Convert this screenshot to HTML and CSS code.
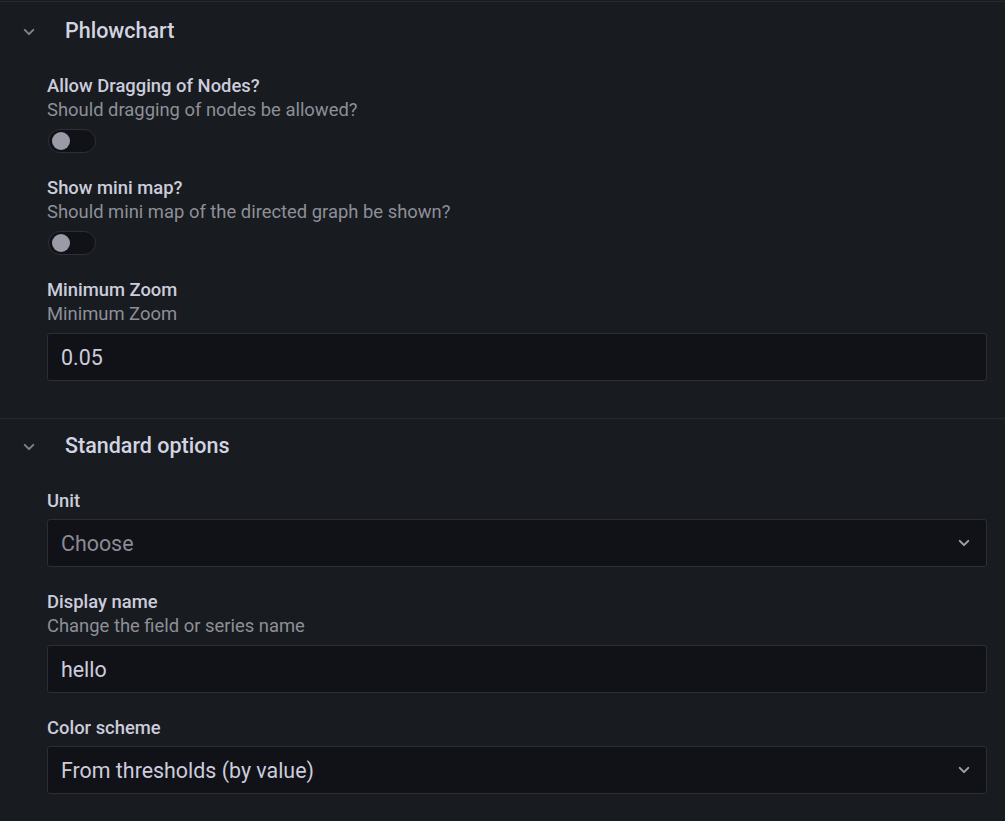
FILE: index.html
```html
<!DOCTYPE html>
<html lang="en">
<head>
<meta charset="utf-8">
<title>Panel options</title>
<link rel="stylesheet" href="styles.css">
</head>
<body>
<div class="pane">
  <section class="section">
    <div class="section-header">
      <span class="chevron-box">
        <svg viewBox="0 0 24 24" width="24" height="24"><path d="M17,9.17a1,1,0,0,0-1.41,0L12,12.71,8.46,9.17a1,1,0,0,0-1.41,0,1,1,0,0,0,0,1.42l4.24,4.24a1,1,0,0,0,1.42,0L17,10.59A1,1,0,0,0,17,9.17Z"/></svg>
      </span>
      <span class="section-title">Phlowchart</span>
    </div>
    <div class="section-body">
      <div class="field">
        <div class="label">Allow Dragging of Nodes?</div>
        <div class="desc">Should dragging of nodes be allowed?</div>
        <div class="control"><span class="switch"><span class="knob"></span></span></div>
      </div>
      <div class="field">
        <div class="label">Show mini map?</div>
        <div class="desc">Should mini map of the directed graph be shown?</div>
        <div class="control"><span class="switch"><span class="knob"></span></span></div>
      </div>
      <div class="field">
        <div class="label">Minimum Zoom</div>
        <div class="desc">Minimum Zoom</div>
        <div class="control"><div class="input"><span class="value">0.05</span></div></div>
      </div>
    </div>
  </section>
  <section class="section">
    <div class="section-header">
      <span class="chevron-box">
        <svg viewBox="0 0 24 24" width="24" height="24"><path d="M17,9.17a1,1,0,0,0-1.41,0L12,12.71,8.46,9.17a1,1,0,0,0-1.41,0,1,1,0,0,0,0,1.42l4.24,4.24a1,1,0,0,0,1.42,0L17,10.59A1,1,0,0,0,17,9.17Z"/></svg>
      </span>
      <span class="section-title">Standard options</span>
    </div>
    <div class="section-body">
      <div class="field">
        <div class="label">Unit</div>
        <div class="control"><div class="input select"><span class="placeholder">Choose</span>
          <span class="select-icon"><svg viewBox="0 0 24 24" width="24" height="24"><path d="M17,9.17a1,1,0,0,0-1.41,0L12,12.71,8.46,9.17a1,1,0,0,0-1.41,0,1,1,0,0,0,0,1.42l4.24,4.24a1,1,0,0,0,1.42,0L17,10.59A1,1,0,0,0,17,9.17Z"/></svg></span>
        </div></div>
      </div>
      <div class="field">
        <div class="label">Display name</div>
        <div class="desc">Change the field or series name</div>
        <div class="control"><div class="input"><span class="value">hello</span></div></div>
      </div>
      <div class="field">
        <div class="label">Color scheme</div>
        <div class="control"><div class="input select"><span class="value">From thresholds (by value)</span>
          <span class="select-icon"><svg viewBox="0 0 24 24" width="24" height="24"><path d="M17,9.17a1,1,0,0,0-1.41,0L12,12.71,8.46,9.17a1,1,0,0,0-1.41,0,1,1,0,0,0,0,1.42l4.24,4.24a1,1,0,0,0,1.42,0L17,10.59A1,1,0,0,0,17,9.17Z"/></svg></span>
        </div></div>
      </div>
    </div>
  </section>
</div>
</body>
</html>
```

FILE: styles.css
```css
html, body {
  margin: 0;
  padding: 0;
  background: #181b1f;
}
body {
  font-family: Roboto, "Liberation Sans", sans-serif;
  color: #ccccdc;
}
.pane {
  margin-top: 1px;
  border-top: 1px solid #25282d;
  padding-top: 2px;
}
.section + .section {
  border-top: 1px solid #25282d;
}
.section-header {
  display: flex;
  align-items: center;
  padding: 15px 0 15px 17px;
  height: 24px;
}
.chevron-box {
  display: flex;
  width: 24px;
  height: 24px;
  margin-right: 24px;
  margin-top: 2px;
}
.chevron-box svg {
  fill: #80828a;
}
.section-title {
  font-size: 21.5px;
  font-weight: 500;
  line-height: 24px;
  color: #d3d4e1;
}
.section-body {
  padding: 16px 18px 14px 47px;
}
.field {
  margin-bottom: 23px;
}
.label {
  font-size: 18.4px;
  font-weight: 500;
  line-height: 24px;
  color: #ccccdc;
}
.desc {
  font-size: 18.4px;
  line-height: 24px;
  color: #8e8f99;
  padding-bottom: 1px;
}
.control {
  margin-top: 6px;
  display: flex;
}
.switch {
  position: relative;
  display: block;
  width: 46px;
  height: 22px;
  margin-left: 1px;
  border: 1px solid #2c2f35;
  border-radius: 12px;
  background: #111217;
}
.knob {
  position: absolute;
  left: 3px;
  top: 2px;
  width: 18px;
  height: 18px;
  border-radius: 50%;
  background: #9a9ba6;
}
.input {
  flex: 1;
  display: flex;
  align-items: center;
  height: 46px;
  padding: 0 10px 0 13px;
  border: 1px solid #2c2e34;
  border-radius: 3px;
  background: #111217;
  font-size: 21.4px;
}
.value {
  flex: 1;
  color: #ccccdc;
}
.placeholder {
  flex: 1;
  color: #8a8b94;
}
.select-icon {
  display: flex;
  width: 24px;
  height: 24px;
}
.select-icon svg {
  fill: #a0a1ab;
}
```
